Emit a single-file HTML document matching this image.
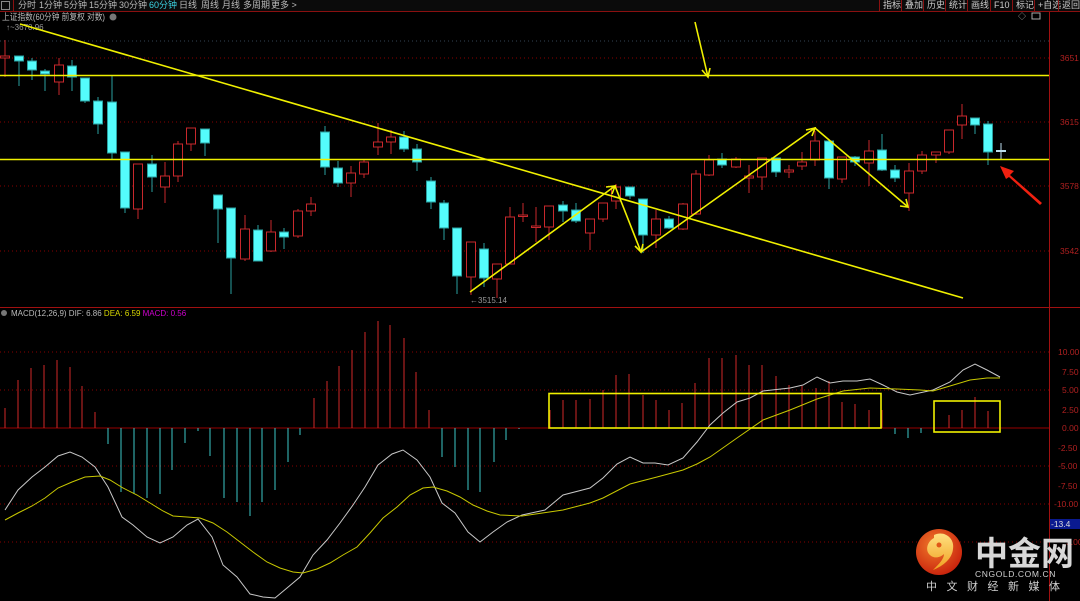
<!DOCTYPE html>
<html><head><meta charset="utf-8"><style>
*{margin:0;padding:0}
body{width:1080px;height:601px;background:#000;overflow:hidden;position:relative;font-family:"Liberation Sans","Noto Sans CJK SC",sans-serif}
.top{position:absolute;left:0;top:0;width:1080px;height:11px;background:#0b0b0b;border-bottom:1px solid #8a1010;font-size:9px;line-height:11px;color:#bbb;white-space:nowrap}
.top span{position:absolute;top:0}
.rb{position:absolute;top:0;height:11px;border-left:1px solid #8a1010;font-size:9px;color:#ccc;line-height:11px;padding-left:3px}
svg{position:absolute;left:0;top:0}
</style></head><body>
<div class="top">
<span style="left:1px;width:9px;height:9px;top:1px;border:1px solid #888;box-sizing:border-box"></span>
<span style="left:13px;top:0;height:11px;border-left:1px solid #8a1010"></span>
<span style="left:18px">分时</span><span style="left:39px">1分钟</span><span style="left:64px">5分钟</span><span style="left:89px">15分钟</span><span style="left:119px">30分钟</span><span style="left:149px;color:#3cd6e6">60分钟</span><span style="left:179px">日线</span><span style="left:201px">周线</span><span style="left:222px">月线</span><span style="left:243px">多周期</span><span style="left:271px">更多 &gt;</span>
<div class="rb" style="left:879px">指标</div><div class="rb" style="left:901px">叠加</div><div class="rb" style="left:923px">历史</div><div class="rb" style="left:945px">统计</div><div class="rb" style="left:967px">画线</div><div class="rb" style="left:990px">F10</div><div class="rb" style="left:1012px">标记</div><div class="rb" style="left:1034px">+自选</div><div class="rb" style="left:1058px">返回</div>
</div>
<svg width="1080" height="601" viewBox="0 0 1080 601" font-family="Liberation Sans, Noto Sans CJK SC, sans-serif">
<g stroke="#800" stroke-dasharray="1,3" stroke-width="1">
<line x1="0" y1="41" x2="1049" y2="41" stroke="#345"/>
<line x1="0" y1="58" x2="1049" y2="58"/><line x1="0" y1="122" x2="1049" y2="122"/><line x1="0" y1="186" x2="1049" y2="186"/><line x1="0" y1="251" x2="1049" y2="251"/>
<line x1="0" y1="352" x2="1049" y2="352"/><line x1="0" y1="390" x2="1049" y2="390"/><line x1="0" y1="466" x2="1049" y2="466"/><line x1="0" y1="504" x2="1049" y2="504"/><line x1="0" y1="542" x2="1049" y2="542"/>
</g>
<line x1="0" y1="428" x2="1049" y2="428" stroke="#900" stroke-width="1"/>
<line x1="1049.5" y1="12" x2="1049.5" y2="601" stroke="#a01010"/>
<line x1="0" y1="307.5" x2="1080" y2="307.5" stroke="#a01010"/>
<g fill="#b02020" font-size="8.5">
<text x="1060" y="61">3651</text><text x="1060" y="125">3615</text><text x="1060" y="189">3578</text><text x="1060" y="254">3542</text>
<text x="1058" y="355">10.00</text><text x="1062" y="375">7.50</text><text x="1062" y="393">5.00</text><text x="1062" y="413">2.50</text><text x="1062" y="431">0.00</text><text x="1058" y="451">-2.50</text><text x="1058" y="469">-5.00</text><text x="1058" y="489">-7.50</text><text x="1054" y="507">-10.00</text><text x="1066" y="545">5.00</text>
</g>
<rect x="1050" y="519" width="30" height="10" fill="#0a1a90"/><text x="1051" y="527" fill="#ddd" font-size="8.5">-13.4</text>
<text x="2" y="20" fill="#bbb" font-size="9" textLength="103" lengthAdjust="spacingAndGlyphs">上证指数(60分钟 前复权 对数)</text>
<circle cx="113" cy="17" r="3.5" fill="#777"/>
<text x="6" y="30" fill="#999" font-size="8">↑~3670.96</text>
<text x="470" y="303" fill="#999" font-size="8">←3515.14</text>
<text x="1018" y="19" fill="#aaa" font-size="8">◇</text><rect x="1032" y="13" width="8" height="6" fill="none" stroke="#aaa"/>
<circle cx="4" cy="313" r="3" fill="#777"/>
<text x="11" y="316" font-size="8"><tspan fill="#bbb">MACD(12,26,9)  DIF: 6.86 </tspan><tspan fill="#d8d800"> DEA: 6.59 </tspan><tspan fill="#d000d0"> MACD: 0.56</tspan></text>
<g stroke-width="1">
<g stroke="#c8282c" fill="#000">
<line x1="5" y1="40" x2="5" y2="77"/><rect x="0.5" y="56" width="9" height="2"/>
<line x1="59" y1="58" x2="59" y2="95"/><rect x="54.5" y="65" width="9" height="17"/>
<line x1="138" y1="164" x2="138" y2="219"/><rect x="133.5" y="164" width="9" height="45"/>
<line x1="165" y1="162" x2="165" y2="203"/><rect x="160.5" y="176" width="9" height="11"/>
<line x1="178" y1="141" x2="178" y2="182"/><rect x="173.5" y="144" width="9" height="32"/>
<line x1="191" y1="128" x2="191" y2="151"/><rect x="186.5" y="128" width="9" height="16"/>
<line x1="245" y1="215" x2="245" y2="261"/><rect x="240.5" y="229" width="9" height="30"/>
<line x1="271" y1="220" x2="271" y2="252"/><rect x="266.5" y="232" width="9" height="19"/>
<line x1="298" y1="209" x2="298" y2="238"/><rect x="293.5" y="211" width="9" height="25"/>
<line x1="311" y1="197" x2="311" y2="216"/><rect x="306.5" y="204" width="9" height="7"/>
<line x1="351" y1="166" x2="351" y2="197"/><rect x="346.5" y="173" width="9" height="10"/>
<line x1="364" y1="160" x2="364" y2="178"/><rect x="359.5" y="162" width="9" height="12"/>
<line x1="378" y1="123" x2="378" y2="155"/><rect x="373.5" y="142" width="9" height="5"/>
<line x1="391" y1="130" x2="391" y2="154"/><rect x="386.5" y="137" width="9" height="5"/>
<line x1="471" y1="242" x2="471" y2="295"/><rect x="466.5" y="242" width="9" height="35"/>
<line x1="497" y1="264" x2="497" y2="298"/><rect x="492.5" y="264" width="9" height="15"/>
<line x1="510" y1="207" x2="510" y2="264"/><rect x="505.5" y="217" width="9" height="47"/>
<line x1="523" y1="203" x2="523" y2="222"/><rect x="518.5" y="215" width="9" height="1.5"/>
<line x1="536" y1="207" x2="536" y2="242"/><rect x="531.5" y="226" width="9" height="1.5"/>
<line x1="549" y1="206" x2="549" y2="240"/><rect x="544.5" y="206" width="9" height="21"/>
<line x1="590" y1="219" x2="590" y2="250"/><rect x="585.5" y="219" width="9" height="14"/>
<line x1="603" y1="203" x2="603" y2="222"/><rect x="598.5" y="203" width="9" height="16"/>
<line x1="616" y1="184" x2="616" y2="209"/><rect x="611.5" y="187" width="9" height="14"/>
<line x1="656" y1="210" x2="656" y2="248"/><rect x="651.5" y="219" width="9" height="16"/>
<line x1="683" y1="203" x2="683" y2="230"/><rect x="678.5" y="204" width="9" height="25"/>
<line x1="696" y1="170" x2="696" y2="215"/><rect x="691.5" y="174" width="9" height="40"/>
<line x1="709" y1="155" x2="709" y2="176"/><rect x="704.5" y="160" width="9" height="15"/>
<line x1="736" y1="157" x2="736" y2="168"/><rect x="731.5" y="159" width="9" height="8"/>
<line x1="749" y1="165" x2="749" y2="193"/><rect x="744.5" y="176" width="9" height="2"/>
<line x1="762" y1="158" x2="762" y2="190"/><rect x="757.5" y="158" width="9" height="19"/>
<line x1="789" y1="165" x2="789" y2="178"/><rect x="784.5" y="170" width="9" height="2"/>
<line x1="802" y1="152" x2="802" y2="170"/><rect x="797.5" y="162" width="9" height="4"/>
<line x1="815" y1="131" x2="815" y2="166"/><rect x="810.5" y="141" width="9" height="19"/>
<line x1="842" y1="157" x2="842" y2="183"/><rect x="837.5" y="157" width="9" height="22"/>
<line x1="869" y1="140" x2="869" y2="186"/><rect x="864.5" y="151" width="9" height="12"/>
<line x1="909" y1="163" x2="909" y2="211"/><rect x="904.5" y="171" width="9" height="22"/>
<line x1="922" y1="151" x2="922" y2="174"/><rect x="917.5" y="155" width="9" height="16"/>
<line x1="936" y1="152" x2="936" y2="163"/><rect x="931.5" y="152" width="9" height="3"/>
<line x1="949" y1="130" x2="949" y2="154"/><rect x="944.5" y="130" width="9" height="22"/>
<line x1="962" y1="104" x2="962" y2="139"/><rect x="957.5" y="116" width="9" height="9"/>
</g>
<g stroke="#2aa0a0" fill="#54fcfc">
<line x1="19" y1="56" x2="19" y2="86"/><rect x="14.5" y="56" width="9" height="5"/>
<line x1="32" y1="58" x2="32" y2="80"/><rect x="27.5" y="61" width="9" height="9"/>
<line x1="45" y1="69" x2="45" y2="91"/><rect x="40.5" y="71" width="9" height="3"/>
<line x1="72" y1="60" x2="72" y2="91"/><rect x="67.5" y="66" width="9" height="11"/>
<line x1="85" y1="78" x2="85" y2="103"/><rect x="80.5" y="78" width="9" height="23"/>
<line x1="98" y1="97" x2="98" y2="134"/><rect x="93.5" y="101" width="9" height="23"/>
<line x1="112" y1="76" x2="112" y2="160"/><rect x="107.5" y="102" width="9" height="51"/>
<line x1="125" y1="152" x2="125" y2="213"/><rect x="120.5" y="152" width="9" height="56"/>
<line x1="152" y1="155" x2="152" y2="192"/><rect x="147.5" y="164" width="9" height="13"/>
<line x1="205" y1="129" x2="205" y2="156"/><rect x="200.5" y="129" width="9" height="14"/>
<line x1="218" y1="195" x2="218" y2="243"/><rect x="213.5" y="195" width="9" height="14"/>
<line x1="231" y1="208" x2="231" y2="294"/><rect x="226.5" y="208" width="9" height="50"/>
<line x1="258" y1="225" x2="258" y2="261"/><rect x="253.5" y="230" width="9" height="31"/>
<line x1="284" y1="228" x2="284" y2="249"/><rect x="279.5" y="232" width="9" height="5"/>
<line x1="325" y1="126" x2="325" y2="175"/><rect x="320.5" y="132" width="9" height="35"/>
<line x1="338" y1="161" x2="338" y2="187"/><rect x="333.5" y="168" width="9" height="15"/>
<line x1="404" y1="131" x2="404" y2="152"/><rect x="399.5" y="137" width="9" height="12"/>
<line x1="417" y1="144" x2="417" y2="171"/><rect x="412.5" y="149" width="9" height="13"/>
<line x1="431" y1="177" x2="431" y2="209"/><rect x="426.5" y="181" width="9" height="21"/>
<line x1="444" y1="200" x2="444" y2="240"/><rect x="439.5" y="203" width="9" height="25"/>
<line x1="457" y1="228" x2="457" y2="294"/><rect x="452.5" y="228" width="9" height="48"/>
<line x1="484" y1="243" x2="484" y2="287"/><rect x="479.5" y="249" width="9" height="29"/>
<line x1="563" y1="201" x2="563" y2="222"/><rect x="558.5" y="205" width="9" height="6"/>
<line x1="576" y1="203" x2="576" y2="223"/><rect x="571.5" y="210" width="9" height="11"/>
<line x1="630" y1="187" x2="630" y2="199"/><rect x="625.5" y="187" width="9" height="9"/>
<line x1="643" y1="199" x2="643" y2="253"/><rect x="638.5" y="199" width="9" height="36"/>
<line x1="669" y1="216" x2="669" y2="229"/><rect x="664.5" y="219" width="9" height="9"/>
<line x1="722" y1="153" x2="722" y2="168"/><rect x="717.5" y="159" width="9" height="6"/>
<line x1="776" y1="158" x2="776" y2="177"/><rect x="771.5" y="158" width="9" height="14"/>
<line x1="829" y1="141" x2="829" y2="189"/><rect x="824.5" y="141" width="9" height="37"/>
<line x1="855" y1="156" x2="855" y2="166"/><rect x="850.5" y="157" width="9" height="5"/>
<line x1="882" y1="134" x2="882" y2="171"/><rect x="877.5" y="150" width="9" height="20"/>
<line x1="895" y1="165" x2="895" y2="182"/><rect x="890.5" y="170" width="9" height="8"/>
<line x1="975" y1="118" x2="975" y2="134"/><rect x="970.5" y="118" width="9" height="7"/>
<line x1="988" y1="121" x2="988" y2="165"/><rect x="983.5" y="124" width="9" height="28"/>
<line x1="1001" y1="143" x2="1001" y2="159" stroke="#bde"/><rect x="996.5" y="150.5" width="9" height="1" stroke="#bde"/>
</g>
</g>
<g stroke="#f0f000" stroke-width="1.6" fill="none">
<line x1="0" y1="75.5" x2="1049" y2="75.5"/>
<line x1="0" y1="159.5" x2="1049" y2="159.5"/>
<line x1="20" y1="24" x2="963" y2="298"/>
<polyline points="470,292 615,186 641,252 815,128 908,207"/>
<line x1="695" y1="22" x2="708" y2="77"/>
<polyline points="702,70 708,77 710,68"/>
<polyline points="606,187 615,186 612,194"/>
<polyline points="635,246 641,252 643,244"/>
<polyline points="806,130 815,128 812,136"/>
<polyline points="900,206 908,207 906,199"/>
</g>
<polygon points="1042,203 1010,175 1014,171 1000,166 1006,179 1009,177 1040,205" fill="#f02010"/>
<g stroke="#d02828" stroke-width="1">
<path d="M5 428V408M18 428V380M31 428V368M44 428V365M57 428V360M70 428V367M82 428V386M95 428V412M314 428V398M327 428V381M339 428V366M352 428V350M365 428V332M378 428V321M390 428V325M404 428V338M416 428V372M429 428V410M550 428V410M563 428V400M576 428V400M590 428V399M603 428V390M616 428V375M629 428V374M643 428V395M656 428V400M669 428V410M682 428V403M695 428V383M709 428V358M722 428V358M736 428V355M749 428V365M762 428V365M776 428V376M789 428V385M802 428V386M816 428V388M829 428V381M842 428V402M855 428V404M869 428V410M882 428V410M949 428V415M962 428V410M975 428V397M988 428V411"/>
</g>
<g stroke="#3cc8c8" stroke-width="1">
<path d="M108 428V444M121 428V492M134 428V494M147 428V498M160 428V494M172 428V470M185 428V443M198 428V431M210 428V456M224 428V498M237 428V502M250 428V516M262 428V502M275 428V490M288 428V462M300 428V435M442 428V457M455 428V467M468 428V490M480 428V492M494 428V462M506 428V440M519 428V429M895 428V434M908 428V438M921 428V433"/>
</g>
<polyline fill="none" stroke="#c8c8c8" stroke-width="1" points="5,510 18,490 32,477 45,467 58,456 70,452 82,457 95,467 108,487 122,517 133,525 147,537 160,543 173,537 187,525 198,519 212,537 223,565 237,577 250,594 263,597 275,598 287,588 300,577 313,555 327,540 340,523 353,505 365,487 378,465 392,454 403,450 417,460 430,477 442,503 455,513 468,532 480,542 493,532 507,522 522,515 545,510 563,495 590,488 603,478 617,464 630,457 643,463 655,463 668,465 683,458 697,442 710,425 723,413 737,402 750,398 763,391 790,388 803,385 817,377 830,383 843,381 857,381 870,379 883,385 897,392 910,395 933,390 950,382 963,370 975,364 987,370 1000,377"/>
<polyline fill="none" stroke="#c8c800" stroke-width="1" points="5,520 18,513 32,506 45,498 58,488 72,482 85,477 100,476 110,480 123,488 137,495 150,503 163,511 173,516 187,517 200,518 213,523 227,532 240,542 253,552 267,562 280,568 293,572 303,573 317,569 330,563 343,555 357,547 370,533 383,518 397,507 410,495 423,488 433,487 447,491 460,497 473,505 487,511 500,515 522,516 563,510 590,503 603,498 630,484 657,477 683,470 697,464 710,457 737,438 763,420 790,410 817,399 843,391 870,388 897,389 920,390 933,391 950,386 970,380 987,378 1000,378"/>
<rect x="549" y="393.5" width="332" height="34.5" fill="none" stroke="#f0f000" stroke-width="1.6"/>
<rect x="934" y="401" width="66" height="31" fill="none" stroke="#f0f000" stroke-width="1.6"/>
<defs><radialGradient id="lg" cx="0.4" cy="0.35" r="0.7"><stop offset="0" stop-color="#f07a2a"/><stop offset="1" stop-color="#c8200c"/></radialGradient>
<linearGradient id="sw" x1="0" y1="0" x2="0" y2="1"><stop offset="0" stop-color="#ffe080"/><stop offset="1" stop-color="#f0a020"/></linearGradient></defs>
<circle cx="939" cy="552" r="23" fill="url(#lg)"/>
<path d="M934 535c10-5 21 3 19 14c-1 10-10 17-20 21c6-6 11-11 11-16c-4 4-11 5-15 0c-4-5-1-13 5-16z" fill="url(#sw)"/>
<circle cx="939" cy="545" r="2.5" fill="#e05818"/>
<text x="975" y="565" font-size="33" font-weight="bold" fill="#d8d8d8" font-family="Noto Sans CJK SC, sans-serif">中金网</text>
<text x="975" y="577" font-size="8.5" fill="#d0d0d0" letter-spacing="0.6">CNGOLD.COM.CN</text>
<text x="926" y="590" font-size="11" fill="#d0d0d0" letter-spacing="9.5" font-family="Noto Sans CJK SC, sans-serif">中文财经新媒体</text>
</svg>
</body></html>
